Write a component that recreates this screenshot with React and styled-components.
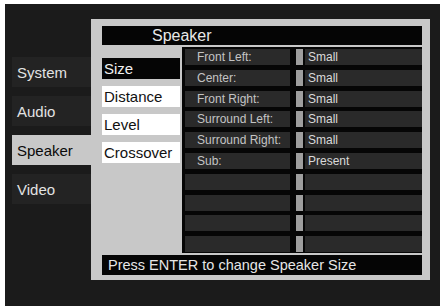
import React from "react";
import styled, { createGlobalStyle } from "styled-components";

const Global = createGlobalStyle`
  html, body { margin: 0; padding: 0; background: #ffffff; }
  body { font-family: "Liberation Sans", Arial, sans-serif; }
`;

const Screen = styled.div`
  margin: 4px 0 0 5px;
  width: 435px;
  height: 302px;
  background: #1b1b1b;
  display: flex;
  align-items: flex-start;
`;

const Tabs = styled.div`
  width: 79px;
  margin-left: 7px;
  padding-top: 53px;
  display: flex;
  flex-direction: column;
  gap: 9px;
`;

const Tab = styled.div`
  height: 30px;
  display: flex;
  align-items: center;
  padding-left: 5px;
  font-size: 15px;
  background: ${(p) => (p.$active ? "#c8c8c8" : "#232323")};
  color: ${(p) => (p.$active ? "#0a0a0a" : "#e2e2e2")};
`;

const Panel = styled.div`
  margin-top: 15px;
  width: 339px;
  height: 261px;
  box-sizing: border-box;
  background: #c8c8c8;
  padding: 7px 8px 5px 11px;
  display: flex;
  flex-direction: column;
  gap: 2px;
`;

const Header = styled.div`
  height: 19px;
  background: #050505;
  color: #e8e8e8;
  font-size: 16px;
  display: flex;
  align-items: center;
  padding-left: 50px;
`;

const Middle = styled.div`
  display: flex;
  gap: 2px;
  height: 206px;
`;

const SubMenu = styled.div`
  width: 78px;
  padding-top: 11px;
  display: flex;
  flex-direction: column;
  gap: 7px;
`;

const SubItem = styled.div`
  height: 21px;
  display: flex;
  align-items: center;
  padding-left: 2px;
  font-size: 15px;
  background: ${(p) => (p.$active ? "#050505" : "#ffffff")};
  color: ${(p) => (p.$active ? "#f0f0f0" : "#111111")};
`;

const Table = styled.div`
  width: 240px;
  box-sizing: border-box;
  background: #060606;
  padding-top: 2px;
  display: flex;
  flex-direction: column;
  gap: 4.8px;
`;

const Row = styled.div`
  height: 16px;
  display: flex;
  padding-left: 3px;
`;

const Label = styled.div`
  width: 105px;
  background: #2a2a2a;
  color: #c4c4c4;
  font-size: 12px;
  padding-left: 12px;
  box-sizing: border-box;
  display: flex;
  align-items: center;
`;

const Indicator = styled.div`
  width: 7px;
  margin-left: 6px;
  background: #9e9e9e;
`;

const Value = styled.div`
  flex: 1;
  margin-left: 2px;
  background: #2a2a2a;
  color: #dadada;
  font-size: 12px;
  padding-left: 3px;
  display: flex;
  align-items: center;
`;

const Footer = styled.div`
  height: 20px;
  background: #050505;
  color: #e6e6e6;
  font-size: 14.5px;
  display: flex;
  align-items: center;
  padding-left: 6px;
`;

const tabs = ["System", "Audio", "Speaker", "Video"];
const subs = ["Size", "Distance", "Level", "Crossover"];
const rows = [
  ["Front Left:", "Small"],
  ["Center:", "Small"],
  ["Front Right:", "Small"],
  ["Surround Left:", "Small"],
  ["Surround Right:", "Small"],
  ["Sub:", "Present"],
  ["", ""],
  ["", ""],
  ["", ""],
  ["", ""],
];

export default function App() {
  return (
    <>
      <Global />
      <Screen>
        <Tabs>
          {tabs.map((t) => (
            <Tab key={t} $active={t === "Speaker"}>
              {t}
            </Tab>
          ))}
        </Tabs>
        <Panel>
          <Header>Speaker</Header>
          <Middle>
            <SubMenu>
              {subs.map((s) => (
                <SubItem key={s} $active={s === "Size"}>
                  {s}
                </SubItem>
              ))}
            </SubMenu>
            <Table>
              {rows.map(([l, v], i) => (
                <Row key={i}>
                  <Label>{l}</Label>
                  <Indicator />
                  <Value>{v}</Value>
                </Row>
              ))}
            </Table>
          </Middle>
          <Footer>Press ENTER to change Speaker Size</Footer>
        </Panel>
      </Screen>
    </>
  );
}
